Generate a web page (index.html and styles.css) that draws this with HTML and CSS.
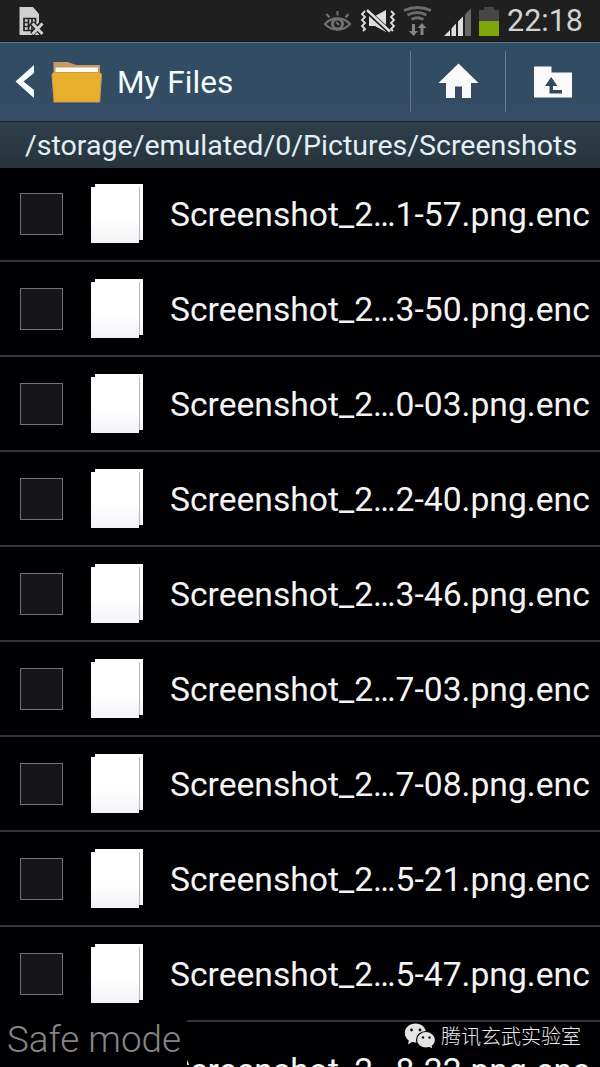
FILE: index.html
```html
<!DOCTYPE html>
<html lang="en">
<head>
<meta charset="utf-8">
<title>My Files</title>
<link rel="stylesheet" href="styles.css">
</head>
<body>
<div class="screen">
  <div class="status">
    <svg class="status-icons" width="500" height="41" viewBox="0 0 500 41">
      <path fill="#cfcfcf" d="M19.500 7H33l6 7v21H19.500z"/>
      <path fill="none" stroke="#252525" stroke-width="1.700" d="M24 18.500h11.500v12H24zM24 22.500h5M24 26.500h5M28.500 18.500v12M32 18.500v4l-3 4M32 26v4"/>
      <path stroke="#1f1f1f" stroke-width="5" d="M32 23l10 11M42 23L32 34"/>
      <path stroke="#cfcfcf" stroke-width="3" d="M32.500 23.500l10 10.500M42.500 23.500l-10 10.500"/>
      <g fill="none" stroke="#717171">
        <path stroke-width="2.200" d="M325 24c7-7.500 18-7.500 25 0c-7 7.500-18 7.500-25 0z"/>
        <circle cx="337.500" cy="24" r="5" stroke-width="3"/>
        <path stroke-width="2" d="M326.500 14l3 3.500M337.500 11v4.500M348.500 14l-3 3.500M336 22l3 3"/>
      </g>
      <path fill="#dedede" d="M369 16h6l11-6v22l-11-6h-6z"/>
      <path stroke="#1f1f1f" stroke-width="5" d="M366 10l24 22"/>
      <path stroke="#dedede" stroke-width="2.400" d="M367 10l23 21.500"/>
      <path fill="none" stroke="#dedede" stroke-width="1.800" d="M365 11l-3 3 3 3-3 3 3 3-3 3 3 3-2 2M391 11l3 3-3 3 3 3-3 3 3 3-3 3 2 2"/>
      <g fill="none" stroke="#6c6c6c" stroke-width="3">
        <path d="M404 10.500q13.500-6 27 0M407.500 15q9.500-5 19 0M411.500 19.500q6-3.500 12 0"/>
      </g>
      <path fill="#858585" d="M412 24h3v7h3l-4.500 5-4.500-5h3zM420.500 35v-7h-3l4.500-5 4.500 5h-3v7z"/>
      <path fill="#dedede" d="M444 36l6-6v6zM451.500 28.500l4.500-5V36h-4.500zM458 21.500l5-5V36h-5z"/>
      <path fill="#686868" d="M465 14.500l6-6V36h-6z"/>
      <path fill="#464646" d="M479 10h5V7h10v3h5v11h-20z"/>
      <path fill="#7ea70a" d="M479 21h20v15h-20z"/>
    </svg>
    <span class="clock">22:18</span>
  </div>
  <header class="bar">
    <svg class="nav-icons" width="110" height="78" viewBox="0 43 110 78">
      <path fill="#f2fbfd" d="M34 65v8l-10.500 8.500L34 90v8L15.500 81.500z"/>
      <path fill="#c59a66" d="M53.500 62h14l9 3H100v18H53.500z"/>
      <path fill="#fffaf0" d="M55.500 67.500H98V78H55.500z"/>
      <path fill="#e8af2f" stroke="#c99d54" stroke-width="1" d="M52 74l2-1.500h45.500l2 1.500-1.800 28H54z"/>
    </svg>
    <h1 class="title">My Files</h1>
    <div class="action">
      <svg width="94" height="78" viewBox="411 42 94 78"><path fill="#fafafa" d="M458.500 62.500L478.500 82H471v15h-9V85.500h-7V97h-9V82h-7.500z"/></svg>
    </div>
    <div class="action">
      <svg width="94" height="78" viewBox="506 42.500 94 78"><path fill="#fafafa" d="M534 66h17.500v6H572v25h-38z"/><path fill="#314a5e" d="M551.200 76.500l6.300 9H553v4h9v3.500H549.500v-7.500H545z"/></svg>
    </div>
  </header>
  <div class="path"><span>/storage/emulated/0/Pictures/Screenshots</span></div>
  <ul class="list">
    <li class="row"><i class="check"></i><i class="file"></i><span class="name">Screenshot_2…1-57.png.enc</span></li>
    <li class="row"><i class="check"></i><i class="file"></i><span class="name">Screenshot_2…3-50.png.enc</span></li>
    <li class="row"><i class="check"></i><i class="file"></i><span class="name">Screenshot_2…0-03.png.enc</span></li>
    <li class="row"><i class="check"></i><i class="file"></i><span class="name">Screenshot_2…2-40.png.enc</span></li>
    <li class="row"><i class="check"></i><i class="file"></i><span class="name">Screenshot_2…3-46.png.enc</span></li>
    <li class="row"><i class="check"></i><i class="file"></i><span class="name">Screenshot_2…7-03.png.enc</span></li>
    <li class="row"><i class="check"></i><i class="file"></i><span class="name">Screenshot_2…7-08.png.enc</span></li>
    <li class="row"><i class="check"></i><i class="file"></i><span class="name">Screenshot_2…5-21.png.enc</span></li>
    <li class="row"><i class="check"></i><i class="file"></i><span class="name">Screenshot_2…5-47.png.enc</span></li>
    <li class="row"><i class="check"></i><i class="file"></i><span class="name">Screenshot_2…8-22.png.enc</span></li>
  </ul>
  <div class="safe">Safe mode</div>
  <div class="mark">
    <svg width="32" height="28" viewBox="404 1022 32 28">
      <path fill="#e4e4e4" d="M415.500 1023.500c6 0 10.500 4 10.500 9.500s-4.500 9.500-10.500 9.500l-3.500-.5-4 2.500.8-4c-2.500-2-4-4.500-4-7.500 0-5.500 4.700-9.500 10.700-9.500z"/>
      <path fill="#e4e4e4" stroke="#000" stroke-width="1.200" d="M426 1031.500c5.300 0 9.500 3.800 9.500 8.500 0 2.500-1.200 4.600-3.200 6.200l.7 3-3.600-1.600-3.400.6c-5.300 0-9.500-3.700-9.500-8.200s4.200-8.500 9.500-8.500z"/>
      <g fill="#111"><circle cx="411.500" cy="1030" r="1.400"/><circle cx="420" cy="1030" r="1.400"/><circle cx="423" cy="1037.500" r="1.200"/><circle cx="429.500" cy="1037.500" r="1.200"/></g>
    </svg>
    <span>腾讯玄武实验室</span>
  </div>
</div>
</body>
</html>
```
FILE: styles.css
```css
body { margin: 0; background: #000; font-family: Roboto, sans-serif; }
.screen { position: relative; width: 600px; height: 1067px; overflow: hidden; background: #000003; color: #f4f4f4; }
.status { display: flex; height: 41px; background: #1f1f1f; border-bottom: 1px solid #11161a; }
.status-icons { flex: none; width: 500px; }
.clock { margin-left: 7px; font-size: 30.5px; line-height: 42px; color: #d2d2d2; white-space: nowrap; }
.bar { display: flex; box-sizing: border-box; height: 80px; background: linear-gradient(#304c62, #354c65); border-top: 1px solid #5f7686; border-bottom: 1px solid #182833; }
.nav-icons { flex: none; }
.title { flex: 1; margin: 0 0 0 7px; font-weight: 400; font-size: 31.6px; line-height: 79px; color: #f2fbfd; white-space: nowrap; }
.action { flex: none; width: 95px; background: linear-gradient(#65798a, #65798a) 0 8px / 1px 61px no-repeat; }
.action svg { display: block; margin-left: 1px; }
.path { height: 46px; background: linear-gradient(#2e3e4c, #26353b); font-size: 28.55px; line-height: 47px; padding-left: 25px; color: #e1f0f5; white-space: nowrap; }
.list { margin: 0; padding: 0; list-style: none; }
.row { display: flex; align-items: center; box-sizing: border-box; height: 95px; padding-left: 20px; border-bottom: 2px solid #353537; }
.row:first-child { height: 94px; padding-bottom: 1px; }
.row:last-child { padding-top: 2px; }
.check { flex: none; box-sizing: border-box; width: 43px; height: 42px; border: 1px solid #737373; background: #161618; }
.file { flex: none; width: 52px; height: 59px; margin-left: 28px; background: linear-gradient(#b8b8bc, #b8b8bc) 48px 3px / 1px 53px no-repeat, linear-gradient(#fff 60%, #f3f3f7); clip-path: polygon(4px 0, 100% 0, 100% 56px, 48px 56px, 48px 100%, 0 100%, 0 3px, 4px 3px); }
.name { margin-left: 27px; padding-top: 3px; font-size: 33.65px; line-height: 40px; white-space: nowrap; }
.safe { position: absolute; left: 0; top: 1016px; width: 180px; height: 51px; padding-left: 7px; background: #000003; color: #858585; font-size: 36.8px; font-weight: 300; line-height: 47px; white-space: nowrap; }
.mark { position: absolute; left: 404px; top: 1022px; display: flex; gap: 5px; }
.mark span { font-family: "Noto Sans CJK SC", sans-serif; font-weight: 300; font-size: 20px; line-height: 27px; color: #e8e8e8; white-space: nowrap; }
```
